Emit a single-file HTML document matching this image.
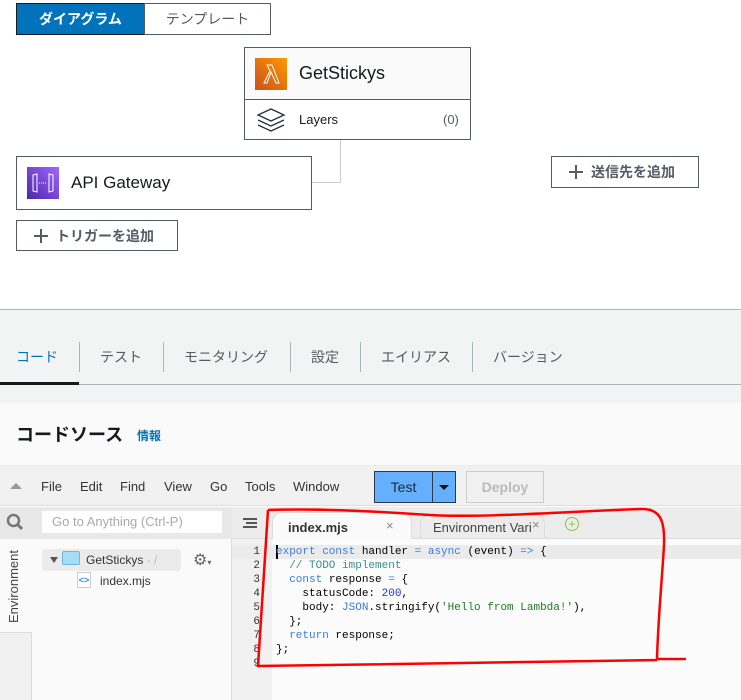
<!DOCTYPE html>
<html><head><meta charset="utf-8"><style>
*{margin:0;padding:0;box-sizing:border-box}
body{width:741px;height:700px;position:relative;overflow:hidden;background:#fff;font-family:"Liberation Sans","Noto Sans CJK JP",sans-serif;color:#16191f}
.a{position:absolute}
.box{position:absolute;border:1px solid #545b64;background:#fff}
.btn{position:absolute;border:1px solid #545b64;background:#fff;font-size:14px;font-weight:bold;color:#545b64;display:flex;align-items:center;padding-left:17px}
.plus{width:14px;height:14px;margin-right:8px;position:relative}
.plus:before{content:"";position:absolute;left:0;top:6px;width:14px;height:2px;background:#545b64}
.plus:after{content:"";position:absolute;left:6px;top:0;width:2px;height:14px;background:#545b64}
.tab{position:absolute;top:347px;font-size:14px;color:#545b64}
.sep{position:absolute;top:342px;width:1px;height:30px;background:#aab7b8}
.menu{position:absolute;top:479px;font-size:13px;color:#333}
.code{position:absolute;left:276px;font-family:"Liberation Mono",monospace;font-size:11px;line-height:14px;white-space:pre;color:#000}
.ln{position:absolute;left:232px;width:28px;text-align:right;font-family:"Liberation Mono",monospace;font-size:11px;line-height:14px;color:#333;white-space:pre}
.k{color:#3a7dd8}.c{color:#3d8f8a}.s{color:#207b21}.n{color:#1e34d6}
</style></head><body>
<div class="a" style="left:16px;top:3px;width:129px;height:32px;background:#0073bb;border:1px solid #16191f;color:#fff;font-size:14px;font-weight:bold;display:flex;align-items:center;justify-content:center">ダイアグラム</div>
<div class="a" style="left:144px;top:3px;width:127px;height:32px;border:1px solid #545b64;color:#545b64;font-size:14px;display:flex;align-items:center;justify-content:center">テンプレート</div>
<div class="box" style="left:244px;top:47px;width:227px;height:93px;background:#fafafa"></div>
<div class="a" style="left:245px;top:99px;width:225px;height:1px;background:#545b64"></div>
<div class="a" style="left:245px;top:100px;width:225px;height:39px;background:#fff"></div>
<div class="a" style="left:255px;top:58px;width:32px;height:32px;background:linear-gradient(45deg,#c8511b,#f90)"></div>
<svg class="a" style="left:255px;top:58px" width="32" height="32"><path d="M9 25 L15 13 L12 7 L17 7 L24 25 L21 25 L16 14 L12 25 Z" fill="none" stroke="#fff" stroke-width="1"/></svg>
<div class="a" style="left:299px;top:63px;font-size:18px;color:#16191f">GetStickys</div>
<svg class="a" style="left:256px;top:108px" width="30" height="28"><g fill="none" stroke="#232f3e" stroke-width="1.3"><path d="M2 7 L15 1 L28 7 L15 13 Z"/><path d="M2 12 L15 18 L28 12"/><path d="M2 17 L15 23 L28 17"/></g></svg>
<div class="a" style="left:299px;top:112px;font-size:13px">Layers</div>
<div class="a" style="left:443px;top:112px;font-size:13px;color:#545b64">(0)</div>
<div class="a" style="left:340px;top:140px;width:1px;height:43px;background:#ccc"></div>
<div class="a" style="left:312px;top:182px;width:29px;height:1px;background:#ccc"></div>
<div class="box" style="left:16px;top:156px;width:296px;height:54px"></div>
<div class="a" style="left:27px;top:167px;width:32px;height:32px;background:linear-gradient(45deg,#4d27aa,#a166ff)"></div>
<svg class="a" style="left:27px;top:167px" width="32" height="32"><g fill="none" stroke="#fff" stroke-width="1"><path d="M6 8 L10 7 L10 25 L6 24 Z"/><path d="M26 8 L22 7 L22 25 L26 24 Z"/><path d="M12 16 H20" stroke-dasharray="1 1"/></g></svg>
<div class="a" style="left:71px;top:173px;font-size:17px">API Gateway</div>
<div class="btn" style="left:16px;top:220px;width:162px;height:31px"><span class="plus"></span>トリガーを追加</div>
<div class="btn" style="left:551px;top:156px;width:148px;height:32px"><span class="plus"></span>送信先を追加</div>
<div class="a" style="left:0;top:309px;width:741px;height:1px;background:#aab7b8"></div>
<div class="a" style="left:0;top:310px;width:741px;height:93px;background:#f2f3f3"></div>
<div class="a" style="left:0;top:384px;width:741px;height:1px;background:#aab7b8"></div>
<div class="a" style="left:0;top:382px;width:79px;height:3px;background:#16191f"></div>
<div class="tab" style="left:16px;color:#0073bb">コード</div>
<div class="sep" style="left:79px"></div>
<div class="tab" style="left:100px">テスト</div>
<div class="sep" style="left:163px"></div>
<div class="tab" style="left:184px">モニタリング</div>
<div class="sep" style="left:290px"></div>
<div class="tab" style="left:311px">設定</div>
<div class="sep" style="left:360px"></div>
<div class="tab" style="left:381px">エイリアス</div>
<div class="sep" style="left:472px"></div>
<div class="tab" style="left:493px">バージョン</div>
<div class="a" style="left:0;top:403px;width:741px;height:63px;background:#fafafa;border-bottom:1px solid #eaeded"></div>
<div class="a" style="left:16px;top:421px;font-size:18px;font-weight:bold">コードソース</div>
<div class="a" style="left:137px;top:427px;font-size:12px;font-weight:bold;color:#0073bb">情報</div>
<div class="a" style="left:0;top:466px;width:741px;height:40px;background:#f1f1f1;border-bottom:1px solid #ddd"></div>
<div class="a" style="left:10px;top:483px;width:0;height:0;border-left:6px solid transparent;border-right:6px solid transparent;border-bottom:6px solid #999"></div>
<div class="menu" style="left:41px">File</div>
<div class="menu" style="left:80px">Edit</div>
<div class="menu" style="left:120px">Find</div>
<div class="menu" style="left:164px">View</div>
<div class="menu" style="left:210px">Go</div>
<div class="menu" style="left:245px">Tools</div>
<div class="menu" style="left:293px">Window</div>
<div class="a" style="left:374px;top:471px;width:59px;height:32px;background:#64b0ff;border:1px solid #2a3a4a;font-size:14px;display:flex;align-items:center;justify-content:center;color:#1a2a3a">Test</div>
<div class="a" style="left:432px;top:471px;width:24px;height:32px;background:#64b0ff;border:1px solid #2a3a4a"></div>
<div class="a" style="left:439px;top:485px;border-left:5px solid transparent;border-right:5px solid transparent;border-top:5px solid #111"></div>
<div class="a" style="left:466px;top:471px;width:78px;height:32px;background:#f0f0f0;border:1px solid #ccc;font-size:14px;font-weight:bold;color:#bbb;display:flex;align-items:center;justify-content:center">Deploy</div>
<div class="a" style="left:0;top:507px;width:232px;height:32px;background:#e8e8e8"></div>
<svg class="a" style="left:6px;top:513px" width="18" height="18"><circle cx="7.5" cy="7.5" r="5.5" fill="none" stroke="#777" stroke-width="2.5"/><path d="M11.5 11.5 L16 16" stroke="#777" stroke-width="3"/></svg>
<div class="a" style="left:42px;top:511px;width:180px;height:22px;background:#fff;font-size:13px;color:#aaa;padding:3px 10px">Go to Anything (Ctrl-P)</div>
<div class="a" style="left:0;top:539px;width:232px;height:161px;background:#fafafa;border-right:1px solid #ddd"></div>
<div class="a" style="left:0;top:632px;width:32px;height:68px;background:#f1f1f1;border-right:1px solid #ddd;border-top:1px solid #ddd"></div>
<div class="a" style="left:6px;top:623px;font-size:13px;color:#444;transform:rotate(-90deg);transform-origin:0 0">Environment</div>
<div class="a" style="left:42px;top:549px;width:139px;height:22px;background:#ebebeb;border-radius:3px"></div>
<div class="a" style="left:50px;top:557px;border-left:4px solid transparent;border-right:4px solid transparent;border-top:6px solid #555"></div>
<div class="a" style="left:62px;top:551px;width:18px;height:14px;background:#a6dcf5;border:1px solid #6cb8e0;border-radius:2px"></div>
<div class="a" style="left:86px;top:553px;font-size:12px;color:#333">GetStickys <span style="color:#bbb">- /</span></div>
<div class="a" style="left:193px;top:550px;font-size:16px;color:#666">⚙<span style="font-size:8px">▾</span></div>
<div class="a" style="left:77px;top:572px;width:14px;height:16px;border:1px solid #ccc;background:#fff;font-size:9px;color:#3a8ed8;text-align:center;line-height:14px;font-weight:bold">&lt;&gt;</div>
<div class="a" style="left:100px;top:574px;font-size:12px;color:#333">index.mjs</div>
<div class="a" style="left:232px;top:507px;width:509px;height:32px;background:#ececec;border-bottom:1px solid #ddd"></div>
<div class="a" style="left:243px;top:518px;width:14px;height:10px;border-top:2px solid #555;border-bottom:2px solid #555"></div>
<div class="a" style="left:246px;top:522px;width:11px;height:2px;background:#555"></div>
<div class="a" style="left:272px;top:512px;width:140px;height:28px;background:#fafafa;border:1px solid #ddd;border-bottom:none;border-radius:10px 10px 0 0"></div>
<div class="a" style="left:288px;top:520px;font-size:13px;font-weight:bold;color:#333">index.mjs</div>
<div class="a" style="left:386px;top:518px;font-size:13px;color:#888">×</div>
<div class="a" style="left:420px;top:514px;width:125px;height:25px;border:1px solid #ddd;border-bottom:none;border-radius:10px 10px 0 0"></div>
<div class="a" style="left:433px;top:520px;font-size:13px;color:#444">Environment Vari</div>
<div class="a" style="left:532px;top:517px;font-size:13px;color:#888">×</div>
<div class="a" style="left:565px;top:517px;width:14px;height:14px;border:1px solid #8bc34a;border-radius:50%;color:#8bc34a;font-size:12px;line-height:12px;text-align:center">+</div>
<div class="a" style="left:232px;top:539px;width:40px;height:161px;background:#f1f1f1"></div>
<div class="a" style="left:272px;top:539px;width:469px;height:161px;background:#fbfbfb"></div>
<div class="a" style="left:232px;top:545px;width:509px;height:14px;background:#ebebeb"></div>
<div class="a" style="left:276px;top:545px;width:2px;height:14px;background:#000"></div>
<div class="ln" style="top:545px">1
2
3
4
5
6
7
8
9</div>
<div class="code" style="top:545px"><span class="k">export const</span> handler <span class="k">=</span> <span class="k">async</span> (event) <span class="k">=&gt;</span> {
  <span class="c">// TODO implement</span>
  <span class="k">const</span> response <span class="k">=</span> {
    statusCode: <span class="n">200</span>,
    body: <span class="k">JSON</span>.stringify(<span class="s">'Hello from Lambda!'</span>),
  };
  <span class="k">return</span> response;
};
</div>
<svg class="a" style="left:0;top:0" width="741" height="700"><path d="M268 510 C330 508 400 513 430 515 C480 518 560 512 640 509 C660 508 665 520 664 545 C662 580 658 620 657 659 L686 659 M657 660 C560 662 400 664 258 666 C260 630 265 560 268 510" fill="none" stroke="#ff0000" stroke-width="2.5"/></svg>
</body></html>
